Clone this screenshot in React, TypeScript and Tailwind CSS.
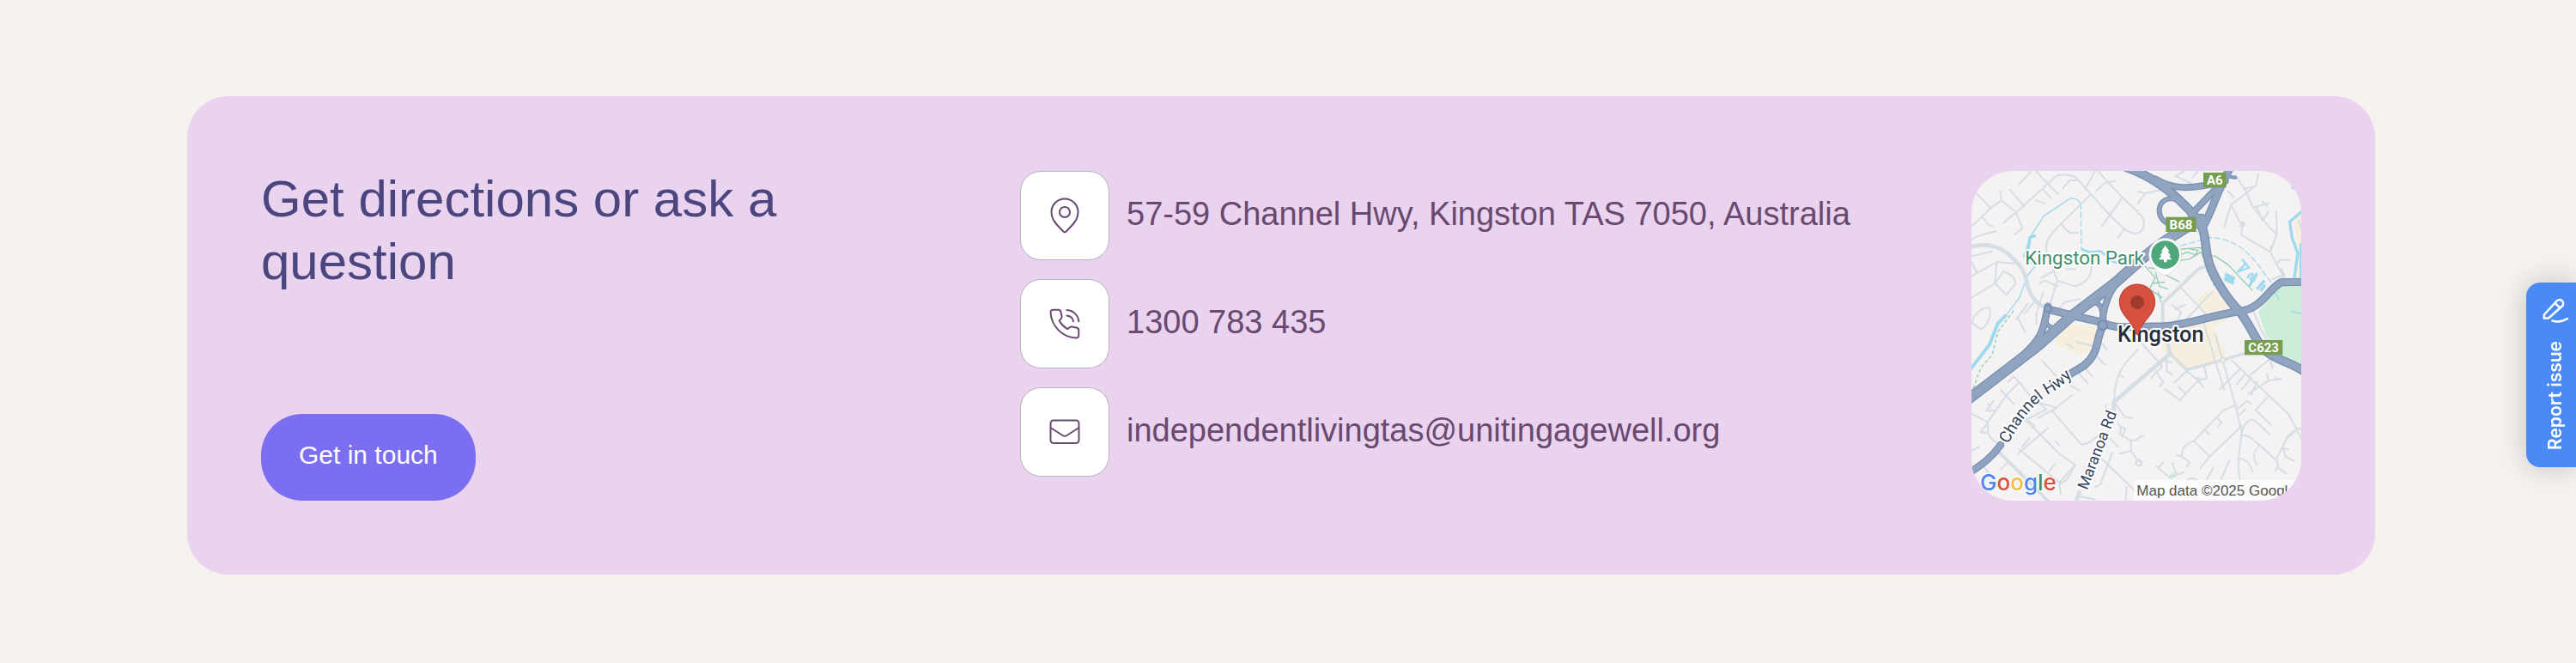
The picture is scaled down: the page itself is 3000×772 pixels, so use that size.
import type { ReactNode } from "react";

const highways = [
  { d: "M315 530C306 570 302 610 285 635C268 665 250 680 225 705", w: 26 },
  { d: "M312 565C300 590 322 612 350 602", w: 16 },
  { d: "M408 550C440 525 468 516 488 520C506 530 506 560 506 590", w: 18 },
  { d: "M506 590C508 530 530 450 620 390", w: 24 },
  { d: "M810 195C785 160 760 150 735 155C702 165 700 195 708 215C716 232 726 240 745 245", w: 18 },
  { d: "M690 85C745 118 800 128 935 92", w: 24 },
  { d: "M815 210L925 95", w: 24 },
  { d: "M858 250C885 205 905 130 950 50", w: 28 },
  { d: "M590 45C690 80 760 140 820 205C880 270 855 310 880 385C905 450 950 515 985 548C1025 600 1035 640 1068 680C1110 720 1160 722 1210 758", w: 32 },
  { d: "M40 852L280 668L400 562L545 452L660 350C730 290 790 262 850 225", w: 38 },
  { d: "M315 540L400 562L500 585C540 605 570 603 610 602L720 600C800 595 860 568 985 547C1060 540 1085 470 1130 446L1210 445", w: 28 },
  { d: "M508 598C480 640 500 690 440 738L395 765", w: 28 },
  { d: "M150 1014C120 1056 90 1080 40 1112", w: 26 },
  { d: "M930 75L970 80", w: 12 },
];

const streetsNW = [
  "M38 108L85 157L18 222M85 157L122 130L174 172L196 227L170 248M174 172L130 208M119 96L122 130M57 190L80 218H94",
  "M174 172L318 42C350 38 366 40 382 50L500 180C560 240 575 250 600 244M152 92L202 150M185 72L225 30M243 28L320 108M243 130L272 140M268 92L295 122M337 88L360 60H384",
  "M18 270C28 255 60 248 104 238M415 90L450 28M460 28L545 120L600 170M545 120L474 220M455 96L482 70M482 70L520 62M552 230L530 260",
  "M432 112L330 212C280 260 270 290 285 320M330 212L360 243H390M285 320L318 410L290 500M318 410L380 430C420 420 440 390 436 362M255 420L275 410L318 430M262 400L300 380",
  "M18 325L90 308M18 345L38 384M18 395L106 345L165 350M106 345L100 420L140 460L170 425C175 400 150 385 130 378L100 420L18 470",
  "M80 505C50 500 18 540 22 560L50 580C75 570 90 530 80 505M268 450L250 510M205 525L240 480M175 545L215 490M245 520V560M205 590L180 540M310 520L345 485L395 475M350 370H380",
];
const streetsNE = [
  "M160 30L130 45L185 70M0 100L25 105L75 95L90 80M25 105L0 140M0 175C20 185 30 210 10 240L0 244M210 28L190 50M420 40L410 80L370 90",
  "M340 40L375 95L402 155L460 225L485 248L462 310L360 250L365 215M410 80L325 145L300 225M325 145L355 205L370 215L355 220M402 155L455 140M415 155L435 200L455 170M450 150L435 135M483 168L485 248M315 98L335 120",
  "M462 310L485 355L510 400M485 355L495 338H530M500 368L510 390L470 405M462 310L465 290M145 430L240 530M230 480L170 545M120 495L150 520L140 545M130 510L165 495M260 450L210 500",
  "M400 510L425 570L450 620M230 560L300 790M560 200L570 225",
];
const streetsSW = [
  "M18 275L75 305L140 210L185 165L165 145L145 165M75 305C70 345 85 370 115 380M75 305L50 340L70 342M185 165L215 205L280 260L200 300M120 192L165 240M95 230L70 265L100 265M75 240L85 255M200 280L240 320M210 300L325 415L380 455L325 515L330 558M325 415",
  "M265 90L315 145L395 195M300 265L400 380C430 390 440 355 480 345M300 265L370 210M250 235L315 255L250 290M285 325L180 415M310 370L325 385M270 340L285 325M220 360L195 390M290 475L310 450M115 410L190 480M120 470L150 440M18 405L45 390M60 460L85 490M185 400L330 520L355 500L380 455",
  "M385 25L440 38L480 0M350 30L372 44M490 50L465 20M445 65L485 104M405 105L440 145M390 130L425 170M600 50C540 110 520 140 516 230M535 140L550 148M490 245C480 260 500 270 510 260M520 240L555 288L580 290",
  "M530 310C540 320 545 330 535 345L575 370L575 405L535 415M575 405L600 440M545 320L555 330L545 355M490 350L530 390M510 410L470 520L450 532M470 430L590 545M560 530L555 600M400 565L450 575M575 370L600 365",
];
const streetsSE = [
  "M270 0L320 175L345 265L362 340L350 440L355 510M362 340C380 290 400 290 415 305L460 348M362 350C390 350 405 370 425 385L485 440L490 465L518 484M485 465L480 475M425 385C400 410 400 430 415 452M350 432C375 432 390 445 400 478",
  "M330 90L385 145L525 275L575 370M355 120L285 190M375 135L345 172M395 150L362 190M425 180L385 205M415 165L395 210M385 145L460 85L470 115M450 135L455 160L425 180M455 160L500 152M480 148L485 160M455 215L410 262L465 315M345 260L380 230L395 240M355 280L375 260",
  "M345 245L300 262L195 370L250 425L362 318M195 370C160 385 150 400 155 425L180 445L170 460M155 425L135 420M275 288L292 305L280 320M230 330L248 346M250 425L218 465M65 460L108 497L160 480M88 445L70 465M120 448L130 478M262 465L240 505M318 440L290 505",
  "M0 15L85 110L45 150M60 125L88 165L75 180M100 85L100 125L120 140M95 90L118 95M95 190L145 228L210 160L170 125L128 165M140 180L165 205M170 125L175 120M210 160L240 150L232 112M210 160L228 182M205 150L235 155M500 395L525 400M505 390L515 425L545 440M520 355L560 325L575 335M485 430L520 360L545 340M0 360L18 352M0 440C15 445 15 455 0 455M170 510C180 495 200 500 215 515",
];

const label = "font-[Roboto,'Liberation_Sans',sans-serif]";

function Shield({ x, y, w, text }: { x: number; y: number; w: number; text: string }) {
  return (
    <g>
      <rect x={x} y={y} width={w} height={52} fill="#779e50" />
      <text x={x + w / 2} y={y + 42} textAnchor="middle" fontSize="45" fontWeight="700" fill="#fff" className={label}>
        {text}
      </text>
    </g>
  );
}

function Streets({ x, y, paths }: { x: number; y: number; paths: string[] }) {
  return (
    <g transform={`translate(${x} ${y})`}>
      {paths.map((d) => (
        <path key={d} d={d} />
      ))}
    </g>
  );
}

function KingstonMap() {
  return (
    <svg viewBox="48 57 1152 1152" className="block size-full" role="img" aria-label="Map of Kingston">
      <rect x="48" y="57" width="1152" height="1152" fill="#f4f2f3" />

      <g fill="#f6efde">
        <path d="M375 590L490 600L480 650L440 705L345 665L340 640Z" />
        <path d="M835 510L865 480L900 472L930 510L958 542L860 565Z" />
        <path d="M720 585L940 560L940 580L890 600L935 690L920 725L800 755L770 740L715 680Z" />
        <path d="M1176 225L1200 200V430H1178L1190 345Z" />
      </g>
      <path d="M1205 458H1130L1100 480L1050 550L1080 640L1135 700L1205 745Z" fill="#cceed8" />
      <path d="M738 1122L758 1106L768 1112L762 1124L746 1135L738 1130Z" fill="#cceed8" />

      <g fill="none" stroke="#9fd9ed" strokeLinejoin="round">
        <path d="M1205 195L1160 235L1168 290L1188 345L1176 430" strokeWidth="10" />
        <path d="M1198 310V430" strokeWidth="8" />
        <path d="M1205 130L1165 115" strokeWidth="6" />
        <path d="M40 755L110 665L140 590L170 560" strokeWidth="12" />
        <path d="M170 560L215 500L245 420L270 390L230 355L252 290L300 215L390 155C410 150 420 155 428 170" strokeWidth="4" />
        <path d="M246 335L252 290L272 282" strokeWidth="10" />
        <path d="M430 170L432 330" strokeWidth="4" strokeDasharray="22 8" />
        <path d="M432 330L455 340L500 338L545 375L580 385" strokeWidth="8" />
        <path d="M780 318L880 290C960 290 1020 340 1060 400L1120 480" strokeWidth="4" strokeDasharray="22 8" />
        <path d="M1085 470L1110 485L1122 505M1165 548L1200 555" strokeWidth="5" />
        <path d="M992 365L1018 395L978 410L1008 378M1012 432C1020 412 1035 412 1030 425C1015 436 1025 446 1040 438" strokeWidth="7" />
        <path d="M1046 415L1018 460M1072 440L1045 470M1074 455L1058 476" strokeWidth="10" />
      </g>
      <path d="M935 412L970 428L962 455L930 440Z" fill="#9fd9ed" />

      <g fill="none" stroke="#d5dee4" strokeWidth="6" strokeLinecap="round" strokeLinejoin="round">
        <Streets x={30} y={30} paths={streetsNW} />
        <Streets x={630} y={30} paths={streetsNE} />
        <Streets x={30} y={630} paths={streetsSW} />
        <Streets x={630} y={630} paths={streetsSE} />
        <path d="M48 322C110 305 160 325 200 370C250 420 235 450 252 480C265 510 285 525 305 532" strokeWidth="14" />
        <path d="M716 590V520L840 400L868 390" strokeWidth="12" />
        <path d="M735 665L742 695L545 865V900M425 1180L412 1215" strokeWidth="14" />
        <path d="M742 695L800 752L925 718L1000 695" strokeWidth="10" />
        <path d="M145 1040L320 1215" strokeWidth="12" />
        <circle cx="633" cy="1077" r="10" />
        <circle cx="995" cy="242" r="6" />
      </g>
      <circle cx="926" cy="718" r="8" fill="#f6efde" stroke="#d5dee4" strokeWidth="5" />

      <g fill="none" stroke="#8fcdb0" strokeWidth="4" strokeLinejoin="round">
        <path d="M780 330L850 325L862 350L900 355L945 385L1030 475M780 350L800 340L830 350L840 335L812 330M775 370L810 365L850 340L865 375M610 400L650 385L690 430L670 470L715 500M690 410L705 460L735 470M665 395L700 400L725 420L775 445M680 450L725 445M700 480L710 515" />
        <path d="M868 400L900 465" strokeDasharray="12 6" />
        <path d="M195 545L140 620L120 700L80 745L50 830" strokeDasharray="12 8" />
      </g>

      <g fill="none" strokeLinecap="round" strokeLinejoin="round">
        <g stroke="#7790b4">
          {highways.map((r) => (
            <path key={r.d} d={r.d} strokeWidth={r.w} />
          ))}
        </g>
        <g stroke="#90a4c0">
          {highways.map((r) => (
            <path key={r.d} d={r.d} strokeWidth={r.w - 8} />
          ))}
        </g>
        <circle cx="315" cy="538" r="12" stroke="#7790b4" strokeWidth="7" fill="#90a4c0" />
        <circle cx="506" cy="596" r="16" stroke="#7790b4" strokeWidth="7" fill="#90a4c0" />
      </g>

      <Shield x={858} y={63} w={80} text="A6" />
      <Shield x={727} y={218} w={106} text="B68" />
      <Shield x={1002} y={648} w={133} text="C623" />

      <g stroke="#fff" strokeWidth="12" strokeLinejoin="round" className={`${label} [paint-order:stroke]`}>
        <text x="235" y="383" fontSize="67" fill="#418c6b">
          Kingston Park
        </text>
        <text x="558" y="655" fontSize="76" fontWeight="500" fill="#272d38">
          Kingston
        </text>
        <path id="channel-hwy" d="M176 1012C215 940 260 870 330 830C360 812 385 790 420 755" fill="none" stroke="none" />
        <text fontSize="57" fill="#34435c">
          <textPath href="#channel-hwy">Channel Hwy</textPath>
        </text>
        <text transform="translate(452 1174) rotate(-69)" fontSize="54" fill="#34435c">
          Maranoa Rd
        </text>
      </g>

      <path d="M725 292C692 292 668 318 668 350C668 385 690 400 708 414C718 423 732 423 742 414C760 400 782 385 782 350C782 318 758 292 725 292Z" fill="#fff" stroke="#c9cfd3" strokeWidth="2" />
      <circle cx="725" cy="350" r="49" fill="#4ea77b" />
      <path d="M725 317L740 338H734L744 353H738L748 367H730V376H720V367H702L712 353H706L716 338H710Z" fill="#fff" />

      <path d="M627 453C591 453 565 481 565 515C565 556 603 578 617 610C620 618 620 629 627 629C634 629 634 618 637 610C651 578 689 556 689 515C689 481 663 453 627 453Z" fill="#d85040" stroke="#b13a2e" strokeWidth="3" />
      <circle cx="627" cy="516" r="24" fill="#a03a2d" />

      <text x="78" y="1174" fontSize="78" fontWeight="500" stroke="#fff" strokeWidth="6" className="font-[Inter,sans-serif] [paint-order:stroke]">
        <tspan fill="#5285ec">G</tspan>
        <tspan fill="#d85040">o</tspan>
        <tspan fill="#f1bf42">o</tspan>
        <tspan fill="#5285ec">g</tspan>
        <tspan fill="#458f5a">l</tspan>
        <tspan fill="#d85040">e</tspan>
      </text>

      <rect x="615" y="1137" width="585" height="72" fill="#fff" fillOpacity="0.7" />
      <text x="625" y="1191" fontSize="51" fill="#555" className="font-['Liberation_Sans',sans-serif]">
        Map data ©2025 Google
      </text>
    </svg>
  );
}

function LineIcon({ children }: { children: ReactNode }) {
  return (
    <svg viewBox="0 0 44 44" className="size-11" fill="none" stroke="currentColor" strokeWidth={2} strokeLinecap="round" strokeLinejoin="round" aria-hidden="true">
      {children}
    </svg>
  );
}

const contacts = [
  {
    text: "57-59 Channel Hwy, Kingston TAS 7050, Australia",
    href: "#map",
    icon: (
      <LineIcon>
        <path d="M22 2.5C13.4 2.5 6.5 9.3 6.5 18C6.5 28 14 33.5 20.4 40.7C21.3 41.7 22.7 41.7 23.6 40.7C30 33.5 37.5 28 37.500 18C37.500 9.300 30.600 2.500 22 2.500Z" />
        <circle cx="22" cy="18" r="6" />
      </LineIcon>
    ),
  },
  {
    text: "1300 783 435",
    href: "tel:1300783435",
    icon: (
      <LineIcon>
        <path d="M8.5 5.7H14.5C16 5.7 17 6.5 17.4 8L18.6 13.5C18.9 15 18.3 15.7 17.3 16.7L15.6 18.4C18 22.5 21 25.7 25.2 28.2L27.5 26.3C28.4 25.5 29.4 25.3 30.5 25.5L35.6 26.6C37.3 27 38.3 28 38.3 29.6V35.6C38.3 37.5 36.9 38.7 35 38.5C19 37.5 6.5 25 5.5 8.7C5.4 7 6.7 5.7 8.5 5.7Z" />
        <path d="M24.5 6C32 6.5 37.7 12 38.3 19.3M24.5 12.5C28.5 13 31.5 15.7 32 19.3" />
      </LineIcon>
    ),
  },
  {
    text: "independentlivingtas@unitingagewell.org",
    href: "mailto:independentlivingtas@unitingagewell.org",
    icon: (
      <LineIcon>
        <rect x="5.5" y="8.5" width="33" height="26.5" rx="3.5" />
        <path d="M5.5 17L19.5 26C21.2 27 22.8 27 24.5 26L38.5 17" />
      </LineIcon>
    ),
  },
];

export default function App() {
  return (
    <main className="min-h-screen bg-[#f5f1ee] pt-28 pr-[234px] pb-[103px] pl-[218px] font-['Liberation_Sans',Arial,sans-serif]">
      <section className="grid grid-cols-[884fr_1108fr_384px] rounded-[48px] bg-[#e9d3ee] px-[86px] pt-[87px] pb-[86px]">
        <div className="flex flex-col items-start justify-between">
          <h2 className="-mt-1 max-w-[700px] text-[60px] leading-[73px] text-[#4b4680]">Get directions or ask a question</h2>
          <a href="#contact" className="flex h-[101px] items-center rounded-[48px] bg-[#7b6ef0] px-11 pb-1.5 text-[30px] text-white">
            Get in touch
          </a>
        </div>
        <ul className="flex flex-col gap-[22px]">
          {contacts.map((c) => (
            <li key={c.text}>
              <a href={c.href} className="flex items-center gap-5 text-[#694970]">
                <span className="flex size-[104px] shrink-0 items-center justify-center rounded-3xl border border-[#b5b2bb] bg-white">
                  {c.icon}
                </span>
                <span className="pb-1 text-[38px] leading-[50px]">{c.text}</span>
              </a>
            </li>
          ))}
        </ul>
        <div id="map" className="size-96 overflow-hidden rounded-[48px]">
          <KingstonMap />
        </div>
      </section>

      <button
        type="button"
        className="fixed top-[329px] right-0 flex w-[58px] flex-col items-center gap-[18px] rounded-l-2xl bg-[#4a8af7] pt-4 pb-5 pl-2.5 font-[Inter,sans-serif] shadow-[0_0_32px_rgba(0,0,0,0.2)]"
      >
        <svg viewBox="0 0 34 34" className="size-[34px]" fill="none" stroke="#fff" strokeWidth="2.5" strokeLinecap="round" strokeLinejoin="round" aria-hidden="true">
          <path d="M3.800 25.500V21.500L18.500 5.500C20.300 3.700 23 3.700 24.800 5.300C26.600 7 26.500 9.800 24.800 11.500L9 25.500ZM17 8.500L22 13" />
          <path d="M13.500 28.500C20 30.500 25 29.800 31 26" />
        </svg>
        <span className="rotate-180 text-[21px] leading-6 font-semibold text-white [writing-mode:vertical-rl]">Report issue</span>
      </button>
    </main>
  );
}
